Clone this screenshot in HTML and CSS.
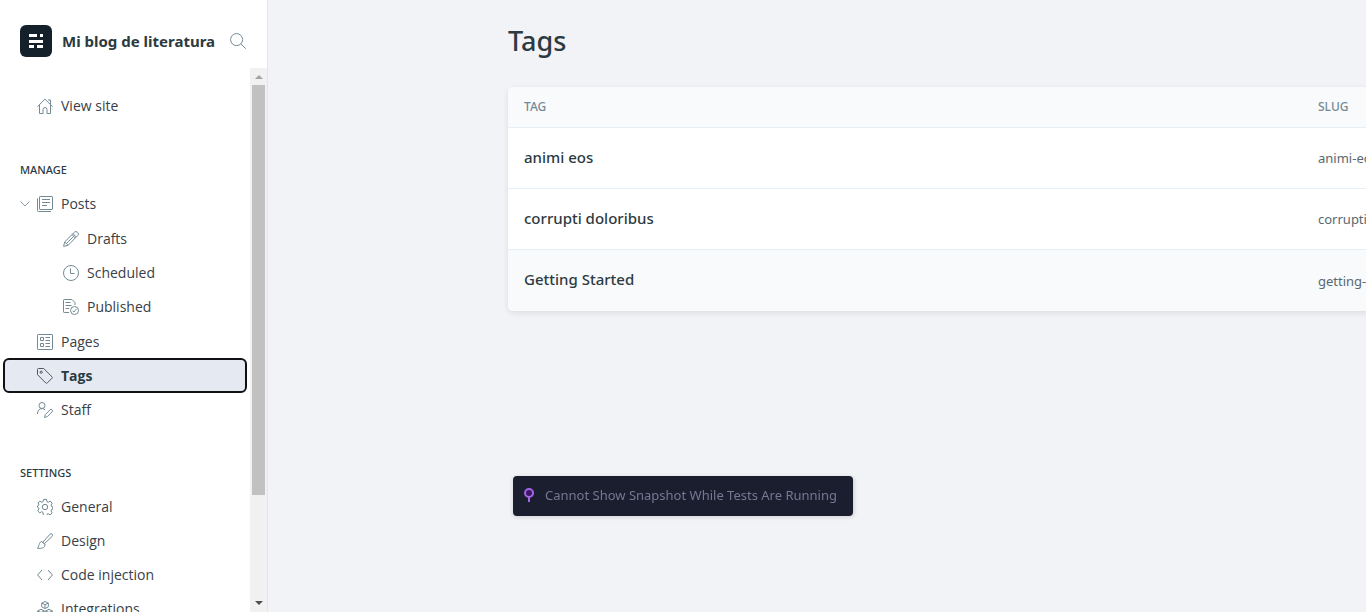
FILE: index.html
```html
<!DOCTYPE html>
<html lang="en">
<head>
<meta charset="utf-8">
<meta name="viewport" content="width=device-width, initial-scale=1">
<title>Tags - Mi blog de literatura</title>
<link rel="stylesheet" href="styles.css">
</head>
<body>
<div class="app">
  <aside class="sidebar">
    <header class="brand">
      <svg class="brand-logo" viewBox="0 0 32 32" aria-hidden="true">
        <rect width="32" height="32" rx="6" fill="#15212a"/>
        <path fill="#fff" d="M9 9h8v3H9zM20 9h3v3h-3zM9 15h14v3H9zM9 20h5v3H9zM17 20h6v3h-6z"/>
      </svg>
      <span class="brand-name">Mi blog de literatura</span>
      <button class="search" type="button" aria-label="Search">
        <svg class="icon" viewBox="0 0 16 16"><circle cx="6.6" cy="6.6" r="6"/><path d="M11 11l4.7 4.7"/></svg>
      </button>
    </header>
    <div class="sidebar-body">
      <nav class="nav">
        <ul class="nav-list nav-top">
          <li><a class="nav-link" href="#site"><svg class="icon" viewBox="0 0 16 16"><path d="M.5 8.600L8 1.200l7.500 7.400M2.500 7v8.500h3.500v-4a2 2 0 0 1 4 0v4h3.500V7M11 2h2.500v4"/></svg>View site</a></li>
        </ul>
        <h2 class="nav-title">Manage</h2>
        <ul class="nav-list">
          <li>
            <div class="nav-parent">
              <button class="toggle" type="button" aria-label="Collapse posts" aria-expanded="true"><svg viewBox="0 0 10 6"><path d="M.5.5L5 5 9.500.5"/></svg></button>
              <a class="nav-link" href="#posts"><svg class="icon" viewBox="0 0 16 16"><rect x="2.500" y=".5" width="13" height="13" rx=".6"/><path d="M.5 2.500v12.200q0 .8.8.8h12.700M5 3.500h8M5 6.500h8M5 9.500h5"/></svg>Posts</a>
            </div>
            <ul class="nav-list nav-sub">
              <li><a class="nav-link" href="#drafts"><svg class="icon" viewBox="0 0 16 16"><path d="M.6 15.400l1.100-4.500L11.500 1.200a2 2 0 0 1 2.900 0l.4.4a2 2 0 0 1 0 2.900L5.100 14.300zM1.700 10.900l3.400 3.400M10 2.700L13.300 6M11.600 4.400l-8.200 8.200M9 3.700l3.300 3.300"/></svg>Drafts</a></li>
              <li><a class="nav-link" href="#scheduled"><svg class="icon" viewBox="0 0 16 16"><circle cx="8" cy="8" r="7.500"/><path d="M7.500 3.500v5h4"/></svg>Scheduled</a></li>
              <li><a class="nav-link" href="#published"><svg class="icon" viewBox="0 0 16 16"><path d="M6 13.500H1.200q-.7 0-.7-.7V1.200Q.5.500 1.200.500H9l3 3V6M2.500 3.500h5M2.500 6.500h6M2.500 9.500h3.500"/><circle cx="11.500" cy="11.500" r="4"/><path d="M9.600 11.700l1.300 1.300 2.500-3"/></svg>Published</a></li>
            </ul>
          </li>
          <li><a class="nav-link" href="#pages"><svg class="icon" viewBox="0 0 16 16"><rect x=".5" y=".5" width="15" height="15" rx=".6"/><path d="M3.500 3.500h3v3h-3zM3.500 9.500h3v3h-3zM8.500 3.500H13M8.500 6.500H13M8.500 9.500H13M8.500 12.500H13"/></svg>Pages</a></li>
          <li><a class="nav-link active" href="#tags" aria-current="page"><svg class="icon" viewBox="0 0 16 16"><path d="M.5 1.500q0-1 1-1h5.200L15 8.800q.8.700 0 1.400L10.200 15q-.7.800-1.400 0L.5 6.700z"/><circle cx="4.200" cy="4.200" r="1.100"/></svg>Tags</a></li>
          <li><a class="nav-link" href="#staff"><svg class="icon" viewBox="0 0 16 16"><circle cx="5" cy="3.500" r="3"/><path d="M.5 12V11a4.500 4.500 0 0 1 7.500-3.300M7.500 15.500l.8-2.900 4.800-4.800a1.400 1.400 0 0 1 2 2l-4.800 4.800z"/></svg>Staff</a></li>
        </ul>
        <h2 class="nav-title">Settings</h2>
        <ul class="nav-list">
          <li><a class="nav-link" href="#general"><svg class="icon" viewBox="0 0 16 16"><path d="M6.500.5h3l.5 2.200 1.300.6 2-1.200 1.900 2.100-1.100 1.900.4 1.200 1.200.5v2.400l-1.300.5-.4 1.200 1.100 1.900-1.900 2.100-2-1.200-1.200.6-.5 2.200h-3L6 13.300l-1.300-.6-2 1.200L.8 11.800l1.100-1.900-.3-1.200L.4 8.200V6.800l1.200-.5.4-1.200L.9 4.200l1.900-2.100 2 1.200L6 2.700z"/><circle cx="8" cy="8" r="2.700"/></svg>General</a></li>
          <li><a class="nav-link" href="#design"><svg class="icon" viewBox="0 0 16 16"><path d="M6 9L13 1.200a1.500 1.500 0 0 1 2.200 2.100L7.600 10.500M5 8.600l2.900 2.900M5 8.600C2.200 8.500 2.600 11.500.6 15.300c3.600.2 7.500 0 7.300-3.800z"/></svg>Design</a></li>
          <li><a class="nav-link" href="#code"><svg class="icon" viewBox="0 0 16 16"><path d="M5 3L.6 8 5 13M11 3l4.400 5L11 13"/></svg>Code injection</a></li>
          <li><a class="nav-link" href="#integrations"><svg class="icon" viewBox="0 0 16 16"><path d="M8 .5l3.300 1.600v3.800L8 7.500 4.700 5.900V2.100zM4.700 2.100L8 3.700l3.300-1.600M8 3.700v3.800M4 8.300l3.300 1.600v3.800L4 15.400.7 13.700V9.900zM.7 9.900L4 11.500l3.300-1.600M4 11.500v3.900M12 8.300l3.300 1.600v3.800L12 15.400l-3.300-1.700V9.900zM8.700 9.900l3.300 1.600 3.300-1.600M12 11.500v3.900"/></svg>Integrations</a></li>
        </ul>
      </nav>
      <div class="scrollbar" aria-hidden="true">
        <svg class="arrow arrow-up" viewBox="0 0 17 17"><path d="M5 11l4-4 4 4z"/></svg>
        <div class="track"><div class="thumb"></div></div>
        <svg class="arrow arrow-down" viewBox="0 0 17 17"><path d="M5 6l4 4 4-4z"/></svg>
      </div>
    </div>
  </aside>
  <main class="main">
    <h1 class="page-title">Tags</h1>
    <table class="tags">
      <thead>
        <tr><th class="col-tag" scope="col">Tag</th><th scope="col">Slug</th></tr>
      </thead>
      <tbody>
        <tr><td class="tag-name">animi eos</td><td class="slug">animi-eos</td></tr>
        <tr><td class="tag-name">corrupti doloribus</td><td class="slug">corrupti-doloribus</td></tr>
        <tr class="hovered"><td class="tag-name">Getting Started</td><td class="slug">getting-started</td></tr>
      </tbody>
    </table>
  </main>
</div>
<div class="toast" role="status">
  <svg class="pin" viewBox="0 0 12 16" aria-hidden="true"><path d="M6 9v6" stroke="#a566e6" stroke-width="2"/><circle cx="6" cy="6" r="4" fill="#3c1763" stroke="#a566e6" stroke-width="2"/></svg>
  <span>Cannot Show Snapshot While Tests Are Running</span>
</div>
</body>
</html>
```
FILE: styles.css
```css
* { box-sizing: border-box; }

body {
  margin: 0;
  background: #f2f3f7;
  color: #394047;
  font: 14px/20px "Noto Sans", "Open Sans", sans-serif;
}

.app {
  display: flex;
  height: 100vh;
  overflow: hidden;
}

.sidebar {
  display: flex;
  flex: 0 0 268px;
  flex-direction: column;
  border-right: 1px solid #e3e7ed;
  background: #fff;
}

.brand {
  display: flex;
  flex: none;
  align-items: center;
  padding: 25px 21px 11px 20px;
}

.brand-logo { width: 32px; height: 32px; }

.brand-name {
  flex: 1;
  margin-left: 10px;
  color: #2c3a41;
  font-size: 15px;
  font-weight: 700;
  white-space: nowrap;
}

.search {
  display: flex;
  padding: 0;
  border: 0;
  background: none;
}

.icon {
  flex: none;
  width: 16px;
  height: 16px;
  fill: none;
  stroke: #738a94;
  stroke-width: 1;
}

.sidebar-body {
  display: flex;
  flex: 1;
  min-height: 0;
}

.nav {
  flex: 1;
  overflow: hidden;
  padding: 0 5px;
}

.nav-list {
  display: flex;
  flex-direction: column;
  gap: 3px;
  margin: 0;
  padding: 0;
  list-style: none;
}

.nav-top { padding: 22px 0 1px; }

.nav-title {
  margin: 38px 0 8px 15px;
  color: #2c3a41;
  font-size: 11px;
  font-weight: 500;
  line-height: 20px;
  text-transform: uppercase;
}

.nav-link {
  display: flex;
  flex: 1;
  align-items: center;
  gap: 8px;
  height: 31px;
  padding-left: 32px;
  border-radius: 4px;
  color: #394047;
  font-family: "Open Sans", "Noto Sans", sans-serif;
  text-decoration: none;
}

.nav-parent { display: flex; }
.nav-parent .nav-link { padding-left: 7px; }

.toggle {
  display: flex;
  align-items: center;
  justify-content: flex-end;
  width: 25px;
  padding: 0;
  border: 0;
  background: none;
}

.toggle svg {
  width: 10px;
  height: 6px;
  fill: none;
  stroke: #8fa0a8;
}

.nav-sub {
  margin: 4px 0 1px;
}

.nav-sub .nav-link { padding-left: 58px; }

.nav-link.active {
  outline: 2px solid #101114;
  background: #e5eaf2;
  color: #2c3a41;
  font-weight: 700;
}

.nav-link.active .icon { stroke: #4a5961; }

.scrollbar {
  display: flex;
  flex: 0 0 17px;
  flex-direction: column;
  background: #f1f1f1;
}

.arrow { flex: none; width: 17px; height: 17px; }
.arrow-up { fill: #a3a3a3; }
.arrow-down { fill: #505050; }
.track { flex: 1; padding: 0 2px; }
.thumb { height: 80.4%; background: #c1c1c1; }

.main {
  flex: 1;
  min-width: 0;
  overflow: hidden;
  padding: 23px 0 0 240px;
}

.page-title {
  margin: 0 0 28px;
  color: #2c3a41;
  font-size: 27px;
  font-weight: 500;
  line-height: 36px;
}

.tags {
  width: 1100px;
  border-collapse: separate;
  border-spacing: 0;
  border-radius: 5px;
  background: #fff;
  box-shadow: 0 2px 6px rgba(0, 0, 0, 0.09);
  table-layout: fixed;
}

.tags th {
  height: 41px;
  padding: 0 16px;
  border-bottom: 1px solid #e5eff5;
  background: #f9fafc;
  color: #738a94;
  font-size: 12px;
  font-weight: 500;
  text-align: left;
  text-transform: uppercase;
}

.tags th:first-child { border-top-left-radius: 5px; }
.tags .col-tag { width: 794px; }

.tags td {
  height: 61px;
  padding: 0 16px;
  border-bottom: 1px solid #e5eff5;
}

.tags tr:last-child td { border-bottom: 0; }
.tags tr:last-child td:first-child { border-bottom-left-radius: 5px; }
.hovered td { background: #f9fafc; }

.tags .tag-name {
  padding-bottom: 3px;
  color: #2c3a41;
  font-size: 15px;
  font-weight: 500;
}

.slug {
  color: #596870;
  font-size: 13px;
}

.toast {
  position: fixed;
  bottom: 96px;
  left: 50%;
  display: flex;
  align-items: center;
  gap: 10px;
  height: 40px;
  padding: 0 16px 2px 10px;
  border-radius: 4px;
  background: #1b1e2e;
  box-shadow: 0 1px 4px rgba(0, 0, 0, 0.15);
  color: #747994;
  font-size: 13px;
  white-space: nowrap;
  transform: translateX(-50%);
}

.pin { width: 12px; height: 16px; }
```
